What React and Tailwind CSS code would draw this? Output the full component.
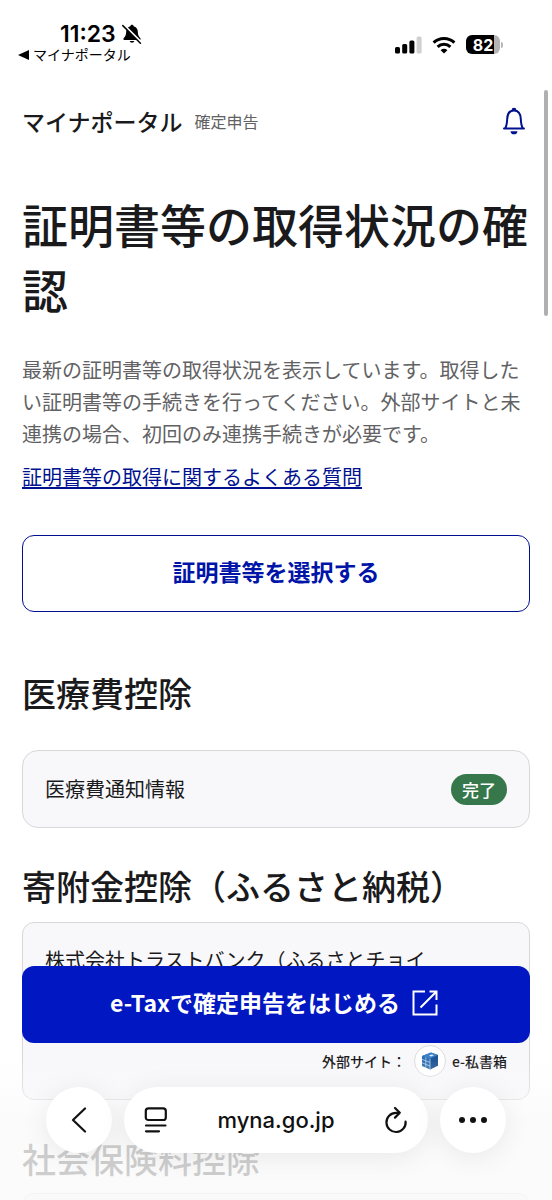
const SilentIcon = () => (
  <svg viewBox="0 0 20 20" className="w-5 h-5" aria-hidden="true">
    <path
      d="M10 .8c-.9 0-1.500.6-1.600 1.400C5.800 2.900 4.200 5 4.200 7.600c0 3.600-1 4.900-2.200 6.100-.4.4-.6.800-.6 1.200 0 .7.500 1.100 1.300 1.100h14.600c.8 0 1.300-.4 1.300-1.100 0-.4-.2-.8-.6-1.200-1.200-1.200-2.200-2.500-2.200-6.100 0-2.600-1.600-4.700-4.200-5.400C11.500 1.400 10.900.8 10 .8zM7.600 17a2.500 2.500 0 0 0 4.800 0z"
      fill="#000"
    />
    <path d="M1.900 1.100 19.200 18.400" stroke="#fff" strokeWidth="2.200" />
    <path d="M.8 1.600 18.400 19.200" stroke="#000" strokeWidth="1.500" strokeLinecap="round" />
  </svg>
)

const SignalIcon = () => (
  <svg viewBox="0 0 27 18" className="w-[27px] h-[18px]" aria-hidden="true">
    <rect x="0" y="11" width="5" height="6.500" rx="1.500" fill="#000" />
    <rect x="7.200" y="8" width="5" height="9.500" rx="1.500" fill="#000" />
    <rect x="14.400" y="4.500" width="5" height="13" rx="1.500" fill="#000" />
    <rect x="21.600" y=".5" width="5" height="17" rx="1.500" fill="#d0d0d0" />
  </svg>
)

const WifiIcon = () => (
  <svg viewBox="0 0 24 18" className="w-6 h-[18px]" aria-hidden="true">
    <g fill="none" stroke="#000" strokeWidth="3">
      <path d="M1.600 6.600a15 15 0 0 1 20.800 0" />
      <path d="M5.600 10.800a9.200 9.200 0 0 1 12.800 0" />
    </g>
    <path d="M12 17.600 8.600 14.200a4.900 4.900 0 0 1 6.800 0z" fill="#000" />
  </svg>
)

const BellIcon = () => (
  <svg viewBox="0 0 24 28" className="w-6 h-7" fill="none" aria-hidden="true">
    <path
      d="M2 21.500h20M3.200 21.300C4.800 18.500 5 16.500 5.200 12 5.400 6.300 7.800 3.400 12 3.400S18.600 6.300 18.800 12c.2 4.500.4 6.500 2 9.300"
      stroke="#00118f"
      strokeWidth="2"
      strokeLinecap="round"
    />
    <path d="M9.600 3.200a2.400 2.400 0 0 1 4.800 0zM8.600 24.200h6.800a3.400 3.100 0 0 1-6.800 0z" fill="#00118f" />
  </svg>
)

const ExternalIcon = () => (
  <svg viewBox="0 0 26 26" className="w-[26px] h-[26px]" fill="none" stroke="#fff" strokeWidth="2" aria-hidden="true">
    <path d="M13 1.500H1.500v23h23V14.500" />
    <path d="M8.500 17.500 24 2M17.500 1.500h7v8.500" />
  </svg>
)

const BoxIcon = () => (
  <svg viewBox="0 0 18 18" className="w-[18px] h-[18px]" aria-hidden="true">
    <path d="M1 4 10 .5 17 3v10.500l-8 4-8-3.500z" fill="#2f6fb3" />
    <path d="M1 4 10 .5 17 3 9 6.800z" fill="#3f83c6" />
    <path d="M9 6.800 17 3v10.500l-8 4z" fill="#1f5796" />
    <path d="M1 7.400l8 3M1 10.800l8 3.200M4.800 5.400v10.200M9 6.800v10.700" stroke="#b9d5ee" strokeWidth=".8" fill="none" />
    <path d="m8 3.600 3-1.100 2 .7-3 1.300z" fill="#e6f1fa" />
  </svg>
)

const PageMenuIcon = () => (
  <svg viewBox="0 0 24 26" className="w-6 h-[26px]" fill="none" stroke="#111" strokeWidth="2.200" strokeLinecap="round" aria-hidden="true">
    <rect x="1.800" y="1.400" width="20" height="11.600" rx="2.600" />
    <path d="M2 18.500h19.500M2 24.300h13" />
  </svg>
)

const ReloadIcon = () => (
  <svg viewBox="0 0 24 28" className="w-6 h-7" fill="none" stroke="#111" strokeWidth="2.200" strokeLinecap="round" strokeLinejoin="round" aria-hidden="true">
    <path d="M21.600 15.500A9.600 9.600 0 1 1 12 6.800h3" />
    <path d="m11 2 4.800 4.800-4.800 4.800" />
  </svg>
)

const StatusBar = () => (
  <div className="flex h-[90px] shrink-0 items-start justify-between pr-[49px] pl-[18px]">
    <div className="pt-[22px] font-[Inter,'Noto_Sans_CJK_JP',sans-serif] text-black">
      <div className="flex h-6 items-center gap-1.5 pl-[42px] text-[23px] leading-6 font-semibold">
        11:23
        <SilentIcon />
      </div>
      <a href="#back" className="flex h-[18px] items-center gap-1 text-sm leading-4">
        <svg viewBox="0 0 11 10" className="h-[10px] w-[11px]" aria-hidden="true">
          <path d="M0 5 11 0v10z" fill="#000" />
        </svg>
        マイナポータル
      </a>
    </div>
    <div className="flex items-center gap-2.5 pt-[35px]">
      <SignalIcon />
      <WifiIcon />
      <div className="flex items-center gap-px">
        <div className="flex h-[19px] w-[34px] items-center justify-center rounded-md bg-linear-to-r from-black from-82% to-[#b5b5b5] to-82% font-[Inter,sans-serif] text-base font-bold text-white">
          82
        </div>
        <div className="h-1.5 w-0.5 rounded-r-full bg-[#b5b5b5]"></div>
      </div>
    </div>
  </div>
)

const Toolbar = () => (
  <nav className="absolute inset-x-0 bottom-0 flex h-[140px] justify-center gap-3 bg-linear-to-b from-[#f9f9f9]/0 to-[#fafafa]/80 to-45% px-[46px] pt-[27px] text-[#111]">
    <button aria-label="戻る" className="flex size-[66px] shrink-0 items-center justify-center rounded-full bg-white shadow-[0_4px_28px_rgba(0,0,0,0.08)]">
      <svg viewBox="0 0 16 26" className="h-[26px] w-4" fill="none" stroke="#111" strokeWidth="2.200" strokeLinecap="round" strokeLinejoin="round">
        <path d="M14 1.500 2 13l12 11.500" />
      </svg>
    </button>
    <div className="flex h-[66px] flex-1 items-center justify-between rounded-full bg-white px-5 shadow-[0_4px_28px_rgba(0,0,0,0.08)]">
      <button aria-label="ページメニュー">
        <PageMenuIcon />
      </button>
      <button className="font-[Inter,sans-serif] text-[22px] font-medium">myna.go.jp</button>
      <button aria-label="再読み込み">
        <ReloadIcon />
      </button>
    </div>
    <button aria-label="その他" className="flex size-[66px] shrink-0 items-center justify-center gap-[5px] rounded-full bg-white shadow-[0_4px_28px_rgba(0,0,0,0.08)]">
      <span className="size-1.5 rounded-full bg-[#111]"></span>
      <span className="size-1.5 rounded-full bg-[#111]"></span>
      <span className="size-1.5 rounded-full bg-[#111]"></span>
    </button>
  </nav>
)

const App = () => {
  return (
    <div className="relative flex h-screen flex-col overflow-hidden bg-white font-['Noto_Sans_CJK_JP',sans-serif] text-[#1a1a1c]">
      <StatusBar />

      <div className="min-h-0 flex-1 overflow-hidden px-[22px]">
        <header className="flex h-[62px] items-center justify-between">
          <div className="flex items-center gap-3">
            <span className="text-[23px] leading-8 font-medium">マイナポータル</span>
            <span className="text-base text-[#626264]">確定申告</span>
          </div>
          <button aria-label="お知らせ" className="pr-1">
            <BellIcon />
          </button>
        </header>

        <main>
          <h1 className="mt-[39px] text-[46px] leading-[65px] font-medium">証明書等の取得状況の確認</h1>
          <p className="mt-[33px] text-xl leading-8 text-[#626264]">
            最新の証明書等の取得状況を表示しています。取得したい証明書等の手続きを行ってください。外部サイトと未連携の場合、初回のみ連携手続きが必要です。
          </p>
          <a href="#faq" className="mt-[11px] block w-fit text-xl leading-8 text-[#00118f] underline underline-offset-2">
            証明書等の取得に関するよくある質問
          </a>
          <button className="mt-[42px] h-[77px] w-full rounded-xl border border-[#00118f] pb-1 text-[23px] font-bold text-[#0014a8]">
            証明書等を選択する
          </button>

          <h2 className="mt-[57px] text-[34px] leading-12 font-medium">医療費控除</h2>
          <div className="mt-[33px] flex h-[78px] items-center justify-between rounded-2xl border border-[#d8d8db] bg-[#f8f8fb] px-[22px]">
            <span className="text-xl">医療費通知情報</span>
            <span className="rounded-full bg-[#36784c] px-[11px] text-[17px] leading-[31px] font-medium text-white">完了</span>
          </div>

          <h2 className="mt-[34px] text-[34px] leading-12 font-medium">寄附金控除（ふるさと納税）</h2>
          <div className="mt-3 flex h-[178px] flex-col justify-between rounded-xl border border-[#d8d8db] bg-[#f8f8fb] px-[22px] pt-[21px] pb-[22px]">
            <span className="text-xl leading-8">株式会社トラストバンク（ふるさとチョイ</span>
            <div className="flex items-center justify-end text-sm font-medium">
              外部サイト：
              <span className="mr-1.5 ml-2 flex size-8 items-center justify-center rounded-full border border-[#dcdcde] bg-white">
                <BoxIcon />
              </span>
              e-私書箱
            </div>
          </div>

          <h2 className="mt-[35px] text-[34px] leading-12 font-medium">社会保険料控除</h2>
          <div className="mt-2.5 h-20 rounded-xl border border-[#d8d8db] bg-[#f8f8fb]"></div>
        </main>
      </div>

      <div className="absolute top-[90px] right-1 h-[226px] w-1 rounded-full bg-[#b0b0b0]"></div>

      <Toolbar />

      <div className="absolute inset-x-0 bottom-[157px] px-[22px]">
        <button className="flex h-[77px] w-full items-center justify-center gap-3 rounded-xl bg-[#0017c1] pr-1 pb-1 text-[23px] font-bold text-white">
          e-Taxで確定申告をはじめる
          <ExternalIcon />
        </button>
      </div>
    </div>
  )
}

export default App
